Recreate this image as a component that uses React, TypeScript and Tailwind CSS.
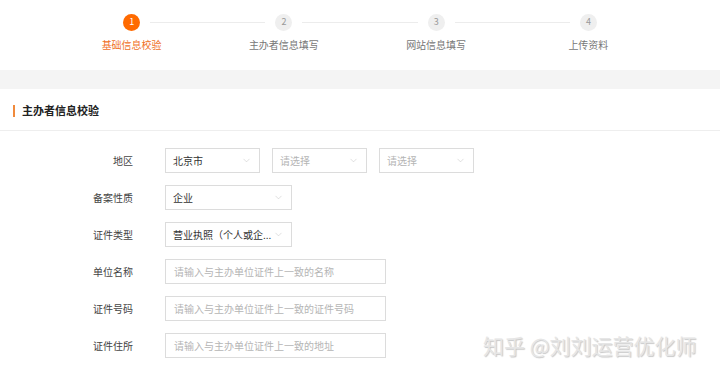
import { ChevronDown } from "lucide-react";

const steps = ["基础信息校验", "主办者信息填写", "网站信息填写", "上传资料"];

function Select({ value, placeholder, width }: { value?: string; placeholder?: string; width: string }) {
  return (
    <div
      className={`${width} h-[25px] flex items-center justify-between border border-[#dcdcdc] bg-white pl-[7px] pr-[7px]`}
    >
      <span className={`text-[10px] whitespace-nowrap ${value ? "text-[#333]" : "text-[#b5b5b5]"}`}>
        {value ?? placeholder}
      </span>
      <ChevronDown size={11} strokeWidth={1} className="text-[#bbbbbb] shrink-0" />
    </div>
  );
}

function Input({ placeholder }: { placeholder: string }) {
  return (
    <div className="w-[221px] h-[25px] flex items-center border border-[#dcdcdc] bg-white pl-[8px]">
      <span className="text-[10px] text-[#b5b5b5] whitespace-nowrap">{placeholder}</span>
    </div>
  );
}

function Row({ label, children }: { label: string; children: React.ReactNode }) {
  return (
    <div className="flex items-center h-[25px]">
      <div className="w-[133px] text-right text-[10px] text-[#444] whitespace-nowrap">{label}</div>
      <div className="ml-[32px] flex gap-[12px]">{children}</div>
    </div>
  );
}

export default function App() {
  return (
    <div
      className="relative w-[720px] h-[374px] bg-white overflow-hidden"
      style={{ fontFamily: '"Noto Sans CJK SC", "Noto Sans", sans-serif' }}
    >
      {/* steps */}
      <div className="h-[70px] flex justify-center pt-[13px]">
        <div className="w-[609px] grid grid-cols-4">
          {steps.map((s, i) => (
            <div key={s} className="flex flex-col items-center">
              <div className="w-full flex items-center h-[18px]">
                <div className={`flex-1 h-px mr-[10px] ${i === 0 ? "" : "bg-[#ececec]"}`}></div>
                <div
                  className={`w-[17px] h-[17px] rounded-full flex items-center justify-center text-[9px] ${
                    i === 0 ? "bg-[#ff6a00] text-white" : "bg-[#efefef] text-[#999]"
                  }`}
                >
                  {i + 1}
                </div>
                <div className={`flex-1 h-px ml-[10px] ${i === 3 ? "" : "bg-[#ececec]"}`}></div>
              </div>
              <div
                className={`mt-[7px] text-[10px] leading-[14px] ${i === 0 ? "text-[#f0701f]" : "text-[#777]"}`}
              >
                {s}
              </div>
            </div>
          ))}
        </div>
      </div>

      <div className="h-[19px] bg-[#f4f4f4]"></div>

      {/* section header */}
      <div className="h-[42px] flex items-center border-b border-[#eeeeee]">
        <div className="ml-[13px] mt-[2px] w-[2px] h-[12px] bg-[#f08a3c]"></div>
        <div className="ml-[7px] mt-[2px] text-[11px] font-bold text-[#222]">主办者信息校验</div>
      </div>

      {/* form */}
      <div className="pt-[17px] flex flex-col gap-[12px]">
        <Row label="地区">
          <Select value="北京市" width="w-[95px]" />
          <Select placeholder="请选择" width="w-[95px]" />
          <Select placeholder="请选择" width="w-[95px]" />
        </Row>
        <Row label="备案性质">
          <Select value="企业" width="w-[127px]" />
        </Row>
        <Row label="证件类型">
          <Select value="营业执照（个人或企..." width="w-[127px]" />
        </Row>
        <Row label="单位名称">
          <Input placeholder="请输入与主办单位证件上一致的名称" />
        </Row>
        <Row label="证件号码">
          <Input placeholder="请输入与主办单位证件上一致的证件号码" />
        </Row>
        <Row label="证件住所">
          <Input placeholder="请输入与主办单位证件上一致的地址" />
        </Row>
      </div>

      {/* watermark */}
      <div className="absolute left-[483px] top-[330px] text-[21px] text-[#e6e6e6] whitespace-nowrap [text-shadow:1px_1px_1px_rgba(0,0,0,0.22)]">
        知乎 @刘刘运营优化师
      </div>
    </div>
  );
}
